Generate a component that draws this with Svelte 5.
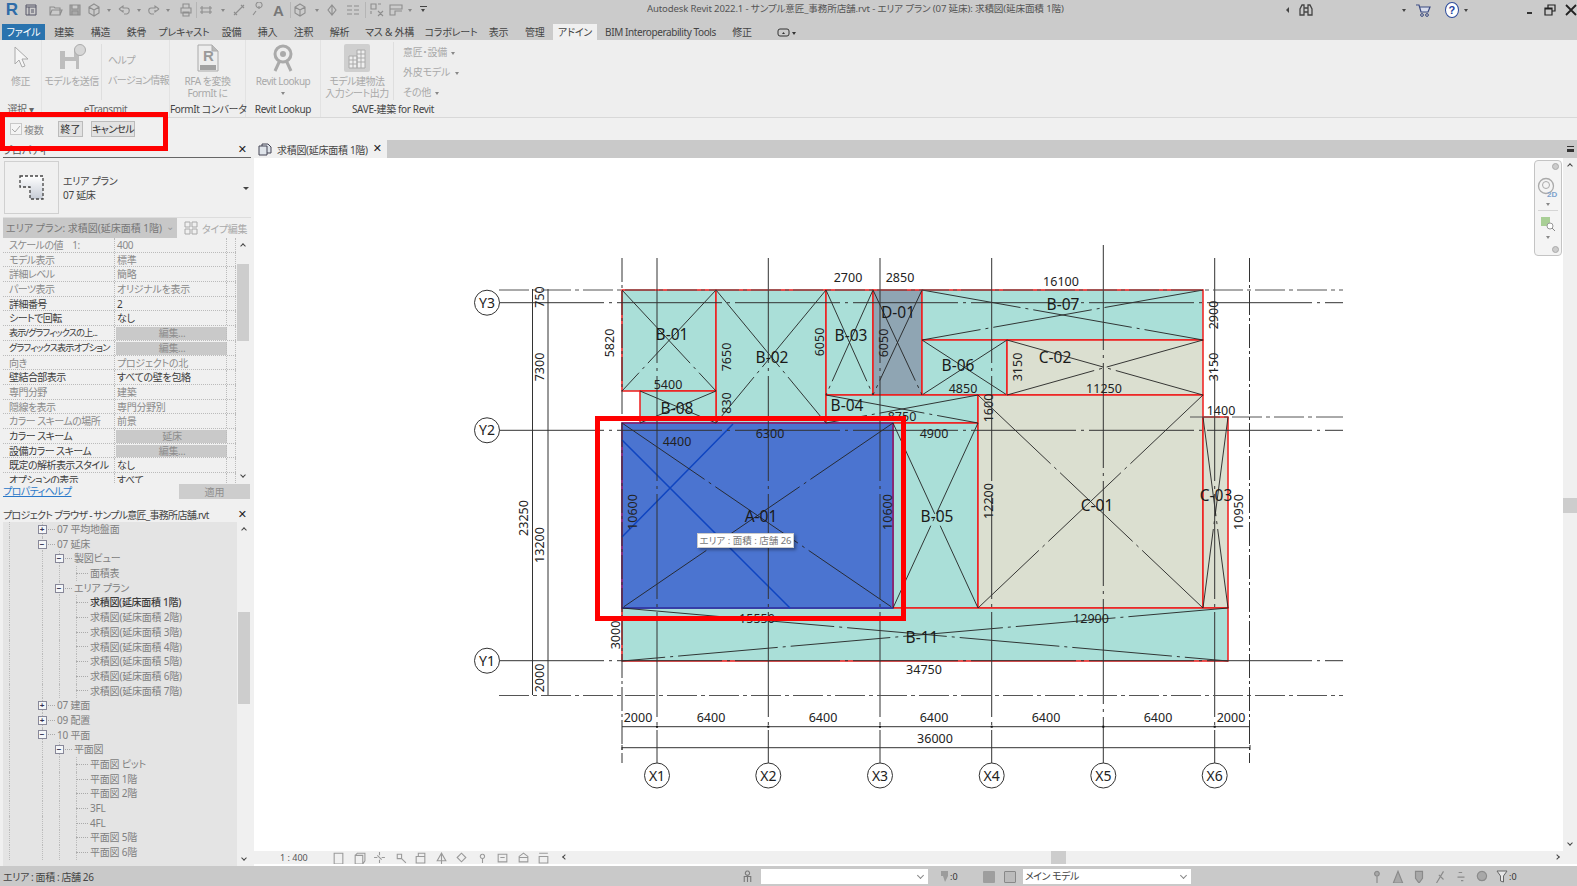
<script lang="ts">
  // label, slot width
  const tabs = [
    ['建築', 37], ['構造', 36], ['鉄骨', 36], ['プレキャスト', 59], ['設備', 36], ['挿入', 36], ['注釈', 36], ['解析', 36],
    ['マス & 外構', 64], ['コラボレート', 59], ['表示', 36], ['管理', 36.5], ['アドイン', 44],
    ['BIM Interoperability Tools', 127], ['修正', 36]
  ];

  const qat = [
    { d: 'M3 5h4l1 1h5v7H3zM3 13l2-5h10l-2 5', w: 20 },
    { d: 'M3 3h10v10H3zM5 3v4h6V3M5 13V9h6v4', w: 20, fill: '#aaa' },
    { d: 'M8 2l5 3v6l-5 3-5-3V5zM3 5l5 3 5-3M8 8v6', w: 17 },
    { caret: true, w: 14.5 },
    { d: 'M3 7l4-3v2h4c3 0 3 5 0 6H8M3 7l4 3V8', w: 14.5 },
    { caret: true, w: 15 },
    { d: 'M13 7L9 4v2H5c-3 0-3 5 0 6h3M13 7L9 10V8', w: 15 },
    { caret: true, w: 14.5 },
    { d: 'M5 6V2h6v4M3 6h10v5H3zM5 10h6v4H5z', w: 20 },
    { d: 'M2 6h12M2 10h12M4 4v8M12 4v8', w: 20, sep: true },
    { caret: true, w: 15 },
    { d: 'M3 13L13 3M3 10l3 3M10 3l3 3', w: 17.5 },
    { d: 'M3 13l3-4M9 6a3 3 0 1 1 .1 0M9 4v3', w: 19.5 },
    { letter: 'A', w: 22 },
    { d: 'M8 2l5 3v6l-5 3-5-3V5zM3 5l5 3 5-3M8 8v6', w: 20, sep: true },
    { caret: true, w: 14 },
    { d: 'M8 3l4 5-4 5-4-5zM8 3v10', w: 17.5 },
    { d: 'M2 4h5M2 8h5M2 12h5M9 4h5M9 8h5M9 12h5', w: 24 },
    { d: 'M2 2h5v5H2zM9 2h3M2 9v3M9 9l5 5M14 9l-5 5', w: 23, sep: true },
    { d: 'M2 3h12v4H2zM2 7v6h5V9h7', w: 16 },
    { caret: true, w: 12.5 },
    { drop: true, w: 13.5 }
  ];

  const props = [
    ['スケールの値　1:', '400', 0, 0],
    ['モデル表示', '標準', 0, 0],
    ['詳細レベル', '簡略', 0, 0],
    ['パーツ表示', 'オリジナルを表示', 0, 0],
    ['詳細番号', '2', 1, 0],
    ['シートで回転', 'なし', 1, 0],
    ['表示/グラフィックスの上...', '編集...', 1, 1],
    ['グラフィックス表示オプション', '編集...', 1, 1],
    ['向き', 'プロジェクトの北', 0, 0],
    ['壁結合部表示', 'すべての壁を包絡', 1, 0],
    ['専門分野', '建築', 0, 0],
    ['隠線を表示', '専門分野別', 0, 0],
    ['カラー スキームの場所', '前景', 0, 0],
    ['カラー スキーム', '延床', 1, 1],
    ['設備カラー スキーム', '編集...', 1, 1],
    ['既定の解析表示スタイル', 'なし', 1, 0],
    ['オプションの表示', 'すべて', 1, 0]
  ];

  // level, label, expander
  const tree = [
    [1, '07 平均地盤面', '+'],
    [1, '07 延床', '-'],
    [2, '製図ビュー', '-'],
    [3, '面積表', ''],
    [2, 'エリア プラン', '-'],
    [3, '求積図(延床面積 1階)', '', true],
    [3, '求積図(延床面積 2階)', ''],
    [3, '求積図(延床面積 3階)', ''],
    [3, '求積図(延床面積 4階)', ''],
    [3, '求積図(延床面積 5階)', ''],
    [3, '求積図(延床面積 6階)', ''],
    [3, '求積図(延床面積 7階)', ''],
    [1, '07 建面', '+'],
    [1, '09 配置', '+'],
    [1, '10 平面', '-'],
    [2, '平面図', '-'],
    [3, '平面図 ピット', ''],
    [3, '平面図 1階', ''],
    [3, '平面図 2階', ''],
    [3, '3FL', ''],
    [3, '4FL', ''],
    [3, '平面図 5階', ''],
    [3, '平面図 6階', '']
  ];

  const TEAL = '#aadfd8';
  const SAND = '#dbdfd0';
  // x1, y1, x2, y2, fill
  const rooms = [
    [622, 290, 716, 391, TEAL],
    [716, 290, 826, 423, TEAL],
    [826, 290, 873, 395, TEAL],
    [873, 290, 922, 395, '#8fa5b3'],
    [922, 290, 1203, 340, TEAL],
    [922, 340, 1007, 395, TEAL],
    [1007, 340, 1203, 395, SAND],
    [826, 395, 978, 423, TEAL],
    [640, 391, 716, 423, TEAL],
    [893, 423, 978, 608, TEAL],
    [978, 395, 1203, 608, SAND],
    [1203, 417, 1228, 608, SAND],
    [622, 608, 1228, 661, TEAL],
    [622, 423, 893, 608, '#4b74d0']
  ];

  const gridX = [
    ['X1', 657, 258], ['X2', 768.3, 258], ['X3', 880, 258],
    ['X4', 991.7, 258], ['X5', 1103.3, 245], ['X6', 1214.7, 258]
  ];
  const gridY = [['Y3', 302.7], ['Y2', 430.3], ['Y1', 660.7]];

  // x, y, text
  const dimsH = [
    [848, 277, '2700'], [900, 277, '2850'], [1061, 281, '16100'], [668, 384, '5400'],
    [677, 441, '4400'], [770, 433, '6300'], [902, 416, '8750'], [934, 433, '4900'],
    [963, 388, '4850'], [1104, 388, '11250'], [1221, 410, '1400'], [757, 618, '15550'],
    [1091, 618, '12900'], [924, 669, '34750'], [638, 717, '2000'], [711, 717, '6400'],
    [823, 717, '6400'], [934, 717, '6400'], [1046, 717, '6400'], [1158, 717, '6400'],
    [1231, 717, '2000'], [935, 738, '36000']
  ];
  const dimsV = [
    [539, 297, '750'], [539, 367, '7300'], [609, 343, '5820'], [726, 357, '7650'],
    [726, 403, '830'], [819, 342, '6050'], [883, 343, '6050'], [523, 518, '23250'],
    [539, 545, '13200'], [539, 678, '2000'], [632, 512, '10600'], [887, 512, '10600'],
    [615, 635, '3000'], [1213, 315, '2900'], [1213, 367, '3150'], [1017, 367, '3150'],
    [988, 408, '1600'], [988, 501, '12200'], [1238, 512, '10950']
  ];
  const tags = [
    [672, 334, 'B-01'], [772, 357, 'B-02'], [851, 335, 'B-03'], [898, 312, 'D-01'],
    [677, 408, 'B-08'], [847, 405, 'B-04'], [761, 516, 'A-01'], [1063, 304, 'B-07'],
    [1055, 357, 'C-02'], [958, 365, 'B-06'], [1097, 505, 'C-01'], [1216, 495, 'C-03'],
    [937, 516, 'B-05'], [922, 637, 'B-11']
  ];

  const viewIcons = ['M2 2h8v10H2z', 'M2 4h7v8H2zM2 4l2-2h7v7l-2 3', 'M6 1v3M6 8v3M1 6h3M8 6h3M4 4l4 4', 'M3 3h4v4H3zM7 7l4 4', 'M2 5h8v6H2zM4 5V2h6v3', 'M2 9l4-7 4 7zM6 2v10', 'M2 6l4-4 4 4-4 4z', 'M6 3a2 2 0 1 1-.1 0M6 7v4', 'M2 3h8v7H2zM4 6h4', 'M2 10V5l4-3 4 3v5zM2 6h8', 'M2 2h8M2 5h8v6H2z'];
  const statusIcons = ['M6 2a2 2 0 1 1-.1 0M6 6v6', 'M2 12l4-10 4 10z', 'M3 2h6v6l-3 4-3-4z', 'M3 12L9 2M5 5l4 4', 'M4 3h3M3 7h6M6 10h2', 'M6 2a4 4 0 1 1-.1 0'];
</script>

<div class="app">
  <header class="titlebar">
    <div class="qat">
      <span class="logo">R</span>
      <svg class="qi doc" width="14" height="14" viewBox="0 0 14 14"><path d="M2 2h10v10H2zM2 4h10M5 4v8M7 7h3M7 9h3" fill="none" stroke="#556"/></svg>
      <span class="qat-gap"></span>
      {#each qat as q}
        <span class="qat-item" class:with-sep={q.sep} style="width:{q.w}px">
          {#if q.d}
            <svg width="16" height="16" viewBox="0 0 16 16"><path d={q.d} fill={q.fill ?? 'none'} stroke="#8e8e8e" stroke-width="1.1"/></svg>
          {:else if q.caret}
            <span class="caret"></span>
          {:else if q.letter}
            <span class="qat-letter">{q.letter}</span>
          {:else if q.drop}
            <span class="drop-line"></span><span class="caret dark"></span>
          {/if}
        </span>
      {/each}
    </div>
    <div class="doc-title">Autodesk Revit 2022.1 - サンプル意匠_事務所店舗.rvt - エリア プラン (07 延床): 求積図(延床面積 1階)</div>
    <div class="title-right">
      <span class="tri-left"></span>
      <svg class="binoc" width="16" height="14" viewBox="0 0 16 14"><path d="M2 12V6l2-4h2v10zM14 12V6l-2-4h-2v10zM6 5h4M6 9h4" fill="none" stroke="#444" stroke-width="1.3"/></svg>
      <span class="caret dark signin"></span>
      <svg class="cart" width="16" height="14" viewBox="0 0 16 14"><path d="M1 2h3l2 7h7l2-5H5" fill="#d7dcec" stroke="#3b4a80" stroke-width="1.2"/><circle cx="7" cy="12" r="1.4" fill="none" stroke="#3b4a80"/><circle cx="12" cy="12" r="1.4" fill="none" stroke="#3b4a80"/></svg>
      <span class="help">?</span>
      <span class="caret dark"></span>
      <span class="win min"></span>
      <svg class="win-restore" width="12" height="12" viewBox="0 0 12 12"><path d="M1 4h7v7H1zM4 4V1h7v6H8M1 5h7" fill="none" stroke="#222" stroke-width="1.2"/></svg>
      <svg class="win-close" width="12" height="12" viewBox="0 0 12 12"><path d="M1 1l10 10M11 1L1 11" stroke="#222" stroke-width="1.8"/></svg>
    </div>
  </header>

  <nav class="tabs">
    <span class="file-tab">ファイル</span>
    {#each tabs as t}
      <span class="tab" class:active={t[0] === 'アドイン'} class:latin={t[1] > 100} style="width:{t[1]}px">{t[0]}</span>
    {/each}
    <svg class="tab-extra" width="20" height="10" viewBox="0 0 20 10"><rect x="1" y="1" width="11" height="7" rx="2" fill="none" stroke="#333"/><path d="M5 6h3L6.500 4zM15 4h4l-2 3z" fill="#333"/></svg>
  </nav>

  <section class="ribbon">
    <div class="panel" style="width:42px">
      <div class="panel-body center">
        <div class="tool">
          <svg width="18" height="26" viewBox="0 0 18 26"><path d="M3 2v17l4-4 3 7 3-1-3-7h6z" fill="#f6f6f6" stroke="#aaa"/></svg>
          <span>修正</span>
        </div>
      </div>
      <div class="panel-title">選択 ▾</div>
    </div>
    <div class="panel" style="width:128px">
      <div class="panel-body">
        <div class="tool send">
          <svg width="28" height="28" viewBox="0 0 28 28"><path d="M2 7h19v18H2z" fill="#bdbdbd"/><path d="M7 7h9v6H7zM7 17h11v8H7z" fill="#ededed"/><circle cx="22" cy="6" r="5.500" fill="#d6d6d6" stroke="#aaa"/></svg>
          <span>モデルを送信</span>
        </div>
        <div class="tool-list bordered">
          <span>ヘルプ</span>
          <span>バージョン情報</span>
        </div>
      </div>
      <div class="panel-title">eTransmit</div>
    </div>
    <div class="panel" style="width:76px">
      <div class="panel-body center">
        <div class="tool">
          <svg width="24" height="28" viewBox="0 0 24 28"><path d="M2 1h14l6 6v20H2z" fill="#ededed" stroke="#aaa"/><path d="M16 1v6h6" fill="#bbb" stroke="#aaa"/><rect x="4" y="21" width="16" height="5" fill="#a2a2a2"/><text x="7" y="17" font-size="15" font-weight="700" fill="#9a9a9a" font-family="Liberation Sans">R</text></svg>
          <span>RFA を変換</span>
          <span>FormIt に</span>
        </div>
      </div>
      <div class="panel-title dark">FormIt コンバータ</div>
    </div>
    <div class="panel" style="width:75px">
      <div class="panel-body center">
        <div class="tool">
          <svg width="24" height="28" viewBox="0 0 24 28"><path d="M4 27l6-13M20 27l-6-13" stroke="#aaa" stroke-width="3"/><circle cx="12" cy="10" r="8" fill="#ededed" stroke="#aaa" stroke-width="3"/><circle cx="12" cy="10" r="3" fill="#aaa"/></svg>
          <span>Revit Lookup</span>
          <span class="caret small-caret"></span>
        </div>
      </div>
      <div class="panel-title dark">Revit Lookup</div>
    </div>
    <div class="panel save" style="width:150px">
      <div class="panel-body">
        <div class="tool build">
          <svg width="26" height="28" viewBox="0 0 26 28"><rect width="26" height="28" rx="2" fill="#cfcfcf"/><path d="M5 12h8v12H5zM13 6h8v18h-8z" fill="#eee" stroke="#aaa"/><path d="M5 16h8M5 20h8M13 10h8M13 14h8M13 18h8M9 12v12M17 6v18" stroke="#aaa"/></svg>
          <span>モデル建物法</span>
          <span>入力シート出力</span>
        </div>
        <div class="tool-list save-list bordered">
          <span>意匠・設備 <i class="caret"></i></span>
          <span>外皮モデル <i class="caret"></i></span>
          <span>その他 <i class="caret"></i></span>
        </div>
      </div>
      <div class="panel-title dark save-title">SAVE-建築 for Revit</div>
    </div>
  </section>

  <section class="optionbar">
    <label class="multi"><span class="check">
      <svg width="10" height="10" viewBox="0 0 10 10"><path d="M1 5l3 3 5-6" fill="none" stroke="#aaa"/></svg>
    </span>複数</label>
    <button class="opt-btn finish">終了</button>
    <button class="opt-btn cancel">キャンセル</button>
  </section>

  <main class="main">
    <aside class="side">
      <section class="props">
        <div class="side-title">プロパティ<span class="x">✕</span></div>
        <div class="type-box">
          <div class="type-preview">
            <svg width="26" height="26" viewBox="0 0 26 26"><defs><linearGradient id="lg" x1="0" y1="0" x2="0" y2="1"><stop offset="0" stop-color="#fff"/><stop offset="1" stop-color="#c6ccd6"/></linearGradient></defs><path d="M1 1h23v23H11V12H1z" fill="url(#lg)" stroke="#444" stroke-width="1.3" stroke-dasharray="3 2"/></svg>
          </div>
          <div class="type-text"><span>エリア プラン</span><span>07 延床</span></div>
          <span class="caret dark type-caret"></span>
        </div>
        <div class="inst-row">
          <div class="inst-select">エリア プラン: 求積図(延床面積 1階)<span class="chev">⌄</span></div>
          <div class="type-edit">
            <svg width="14" height="14" viewBox="0 0 14 14"><path d="M1 1h5v5H1zM8 1h5v5H8zM1 8h5v5H1zM8 8h5v5H8z" fill="none" stroke="#aaa"/></svg>
            タイプ編集
          </div>
        </div>
        <div class="prop-wrap">
          <div class="prop-grid">
            {#each props as p}
              <div class="prop-row" class:on={p[2]}>
                <span class="pl" class:tight={p[0].length > 13}>{p[0]}</span>
                {#if p[3]}
                  <span class="pv pbtn">{p[1]}</span>
                {:else}
                  <span class="pv">{p[1]}</span>
                {/if}
                <span class="pe"></span>
              </div>
            {/each}
          </div>
          <div class="scroll">
            <span class="chev-up"></span>
            <span class="thumb prop-thumb"></span>
            <span class="chev-down"></span>
          </div>
        </div>
        <div class="help-row">
          <span class="help-link">プロパティヘルプ</span>
          <button class="apply">適用</button>
        </div>
      </section>

      <section class="browser">
        <div class="side-title b-title"><span class="b-name">プロジェクト ブラウザ - サンプル意匠_事務所店舗.rvt</span><span class="x">✕</span></div>
        <div class="tree-wrap">
          <div class="tree">
            {#each tree as n}
              <div class="node" class:bold={n[3]} class:leaf={n[0] === 3} style="padding-left:{n[0] === 1 ? 34.5 : n[0] === 2 ? 51.5 : 73}px">
                <i class="guide" style="left:9px"></i>
                <i class="guide" style="left:42px"></i>
                {#if n[0] > 1}<i class="guide" style="left:59px"></i>{/if}
                {#if n[0] === 3}<i class="guide" style="left:76px"></i>{/if}
                {#if n[2]}<span class="box">{n[2] === '+' ? '+' : '−'}</span>{/if}
                <span class="dash"></span>
                <span class="node-label">{n[1]}</span>
              </div>
            {/each}
          </div>
          <div class="scroll tree-scroll">
            <span class="chev-up"></span>
            <span class="thumb tree-thumb"></span>
            <span class="chev-down"></span>
          </div>
        </div>
      </section>
    </aside>

    <div class="view">
      <div class="view-tabs">
        <div class="view-tab">
          <svg width="14" height="13" viewBox="0 0 14 13"><path d="M1 3h8v9H1zM4 3V1h6l3 3v6H9" fill="#dfe4ea" stroke="#445"/></svg>
          <span class="view-name">求積図(延床面積 1階)</span>
          <span class="x">✕</span>
        </div>
        <span class="tab-menu"></span>
      </div>

      <div class="canvas-row">
        <div class="canvas">
          <svg class="plan" width="1309" height="693" viewBox="254 158 1309 693">
            {#each rooms as r}
              <rect x={r[0]} y={r[1]} width={r[2] - r[0]} height={r[3] - r[1]} fill={r[4]} stroke="#f01c1c" stroke-width="1.5"/>
            {/each}
            <rect x="622" y="423" width="271" height="185" fill="none" stroke="#6b2a8c" stroke-width="1.5"/>
            <path d="M622 608H893" stroke="#1a44b8" stroke-width="1.5"/>
            <path d="M622 440L790 608M733 424L622 537" stroke="#0f45c0" stroke-width="1.5" fill="none"/>

            {#each rooms as r}
              <path class="diag" d="M{r[0]} {r[1]}L{r[2]} {r[3]}M{r[2]} {r[1]}L{r[0]} {r[3]}"/>
            {/each}

            <!-- grids -->
            {#each gridX as g}
              <path class="grid" d="M{g[1]} {g[2]}V763"/>
              <circle class="bubble" cx={g[1]} cy="775.500" r="12.500"/>
              <text class="bubble-text" x={g[1]} y="780.500">{g[0]}</text>
            {/each}
            {#each gridY as g}
              <path class="grid" d="M499 {g[1]}H1343"/>
              <circle class="bubble" cx="487" cy={g[1]} r="12.500"/>
              <text class="bubble-text" x="487" y={g[1] + 5}>{g[0]}</text>
            {/each}
            <path class="ref" d="M499 290H1343M499 695.500H1343M1190 417H1343"/>
            <path class="ref-v" d="M622 258V763M1249.500 258V763"/>

            <!-- dimension lines -->
            <path class="dim" d="M532.500 289V695M548 289V695M622 726.700H1250M622 747.700H1250M622 745V750M1250 745V750"/>
            {#each gridX as g}
              <rect x={g[1] - 1} y="725.700" width="2" height="2" fill="#111"/>
            {/each}

            {#each dimsH as d}
              <text class="dim-t" x={d[0]} y={d[1] + 5}>{d[2]}</text>
            {/each}
            {#each dimsV as d}
              <text class="dim-t" transform="translate({d[0] + 4.500} {d[1]}) rotate(-90)">{d[2]}</text>
            {/each}
            {#each tags as t}
              <text class="tag" x={t[0]} y={t[1] + 5.500}>{t[2]}</text>
            {/each}
          </svg>

          <div class="hover-tip">エリア : 面積 : 店舗 26</div>

          <div class="nav-bar">
            <span class="nav-dot top"></span>
            <svg width="22" height="22" viewBox="0 0 22 22"><circle cx="9" cy="9" r="7.500" fill="none" stroke="#aaa" stroke-width="1.300"/><circle cx="9" cy="8" r="3.500" fill="none" stroke="#aaa"/><text x="10" y="20" font-size="8" font-weight="700" fill="#7ea2cc" font-family="Liberation Sans">2D</text></svg>
            <span class="caret"></span>
            <span class="nav-sep"></span>
            <svg width="16" height="16" viewBox="0 0 16 16"><rect x="1" y="1" width="9" height="9" fill="#a9cf96"/><circle cx="10" cy="10" r="3" fill="#fff" stroke="#999"/><path d="M12 12l3 3" stroke="#888"/></svg>
            <span class="caret"></span>
            <span class="nav-dot bottom"></span>
          </div>
        </div>
        <div class="v-scroll">
          <span class="chev-up"></span>
          <span class="thumb v-thumb"></span>
          <span class="chev-down"></span>
        </div>
      </div>

      <div class="view-bar">
        <span class="scale">1 : 400</span>
        <div class="view-icons">
          {#each viewIcons as d}
            <svg width="13" height="13" viewBox="0 0 12 12"><path {d} fill="none" stroke="#9a9a9a"/></svg>
          {/each}
        </div>
        <div class="h-scroll">
          <span class="chev-left"></span>
          <span class="thumb h-thumb"></span>
          <span class="chev-right"></span>
        </div>
      </div>
    </div>
  </main>

  <footer class="status">
    <span class="status-text">エリア : 面積 : 店舗 26</span>
    <div class="status-mid">
      <svg width="13" height="13" viewBox="0 0 12 12"><path d="M6 1a2 2 0 1 1-.1 0M3 11V6h6v5M6 6v5" fill="none" stroke="#777"/></svg>
      <span class="combo c1"></span>
      <span class="zero mid-zero"><svg width="9" height="13" viewBox="0 0 9 13"><path d="M1 1h7v5l-3 6-2-6H1z" fill="#9c9c9c"/></svg>:0</span>
      <span class="sq"></span>
      <span class="sq outline"></span>
      <span class="combo c2">メイン モデル</span>
    </div>
    <div class="status-right">
      {#each statusIcons as d}
        <svg width="14" height="14" viewBox="0 0 12 12"><path {d} fill="#a8a8a8" stroke="#8a8a8a"/></svg>
      {/each}
      <span class="zero"><svg width="12" height="13" viewBox="0 0 12 13"><path d="M1 1h10L7.500 6v6l-3-1V6z" fill="#e6e6e6" stroke="#666"/></svg>:0</span>
    </div>
  </footer>

  <div class="mark mark-options"></div>
  <div class="mark mark-room"></div>
</div>

<style>
  :global(body) {
    margin: 0;
    background: #fff;
    overflow: hidden;
  }
  .app {
    position: relative;
    width: 1577px;
    height: 886px;
    display: grid;
    grid-template-rows: 24px 16px 78px 22px 726px 20px;
    overflow: hidden;
    font-family: "Noto Sans", "Noto Sans CJK JP", sans-serif;
    font-size: 10px;
    font-feature-settings: "palt";
    color: #555;
    background: #f0f0f0;
  }
  svg { display: block; flex: none; }
  button { font-family: inherit; font-feature-settings: inherit; }

  /* title bar */
  .titlebar {
    display: flex;
    align-items: flex-start;
    background: #cbcbcb;
    position: relative;
  }
  .qat { display: flex; align-items: center; height: 20px; }
  .logo {
    width: 24px;
    text-align: center;
    font: 700 17px "Liberation Sans", sans-serif;
    color: #2f6ca8;
  }
  .qat-gap { width: 7px; }
  .qat-item {
    display: flex;
    align-items: center;
    justify-content: center;
    flex: none;
    height: 20px;
    position: relative;
  }
  .with-sep::before {
    content: '';
    position: absolute;
    left: 0;
    top: 2px;
    bottom: 2px;
    width: 1px;
    background: #b5b5b5;
  }
  .qat-letter { font: 700 15px "Liberation Sans", sans-serif; color: #777; }
  .caret {
    display: inline-block;
    width: 0;
    height: 0;
    border-left: 2.5px solid transparent;
    border-right: 2.5px solid transparent;
    border-top: 3px solid #888;
    vertical-align: middle;
  }
  .caret.dark { border-top-color: #444; }
  .drop-line { position: absolute; top: 6px; width: 7px; height: 1px; background: #444; }
  .doc-title {
    position: absolute;
    left: 647px;
    top: 2px;
    line-height: 14px;
    font-size: 9.6px;
    letter-spacing: -0.15px;
    color: #555;
    white-space: nowrap;
  }
  .title-right {
    position: absolute;
    top: 0;
    right: 0;
    height: 20px;
    width: 295px;
    display: flex;
    align-items: center;
  }
  .tri-left {
    width: 0; height: 0;
    margin-right: 9px;
    margin-left: 4px;
    border-top: 3px solid transparent;
    border-bottom: 3px solid transparent;
    border-right: 3px solid #444;
  }
  .signin { margin-left: 88px; margin-right: 9px; }
  .cart { margin-right: 14px; }
  .help {
    width: 14px;
    height: 14px;
    margin-right: 5px;
    border-radius: 50%;
    border: 1px solid #2b4a9c;
    background: #fff;
    color: #1d3fa0;
    font: 700 11px/14px "Liberation Sans", sans-serif;
    text-align: center;
  }
  .win.min { width: 6px; height: 2px; background: #333; margin: 6px 0 0 59px; }
  .win-restore { margin-left: 12px; }
  .win-close { margin-left: 9px; }

  /* ribbon tabs */
  .tabs {
    display: flex;
    align-items: stretch;
    background: #cbcbcb;
    line-height: 16px;
    padding-left: 2px;
    color: #444;
    letter-spacing: -0.2px;
  }
  .file-tab {
    width: 43px;
    background: #2a73ae;
    color: #fff;
    text-align: center;
    margin-right: 0.5px;
  }
  .tab { flex: none; text-align: center; white-space: nowrap; }
  .tab.active { background: #f0f0f0; }
  .tab.latin { letter-spacing: -0.4px; }
  .tab-extra { margin: 4px 0 0 17px; }

  /* ribbon */
  .ribbon {
    display: flex;
    background: #eeeeee;
    border-bottom: 1px solid #d8d8d8;
    box-sizing: border-box;
    color: #a9a9a9;
  }
  .panel {
    flex: none;
    box-sizing: border-box;
    display: flex;
    flex-direction: column;
    border-right: 1px solid #e2e2e2;
  }
  .panel.save { border-right: 0; }
  .panel-body {
    height: 63px;
    display: flex;
    padding-top: 4px;
    box-sizing: border-box;
  }
  .panel-body.center { justify-content: center; }
  .panel-title {
    text-align: center;
    line-height: 13px;
    color: #666;
    white-space: nowrap;
    letter-spacing: -0.35px;
  }
  .panel-title.dark { color: #444; }
  .save-title { padding-right: 6px; }
  .tool {
    display: flex;
    flex-direction: column;
    align-items: center;
    line-height: 12px;
    white-space: nowrap;
    letter-spacing: -0.5px;
  }
  .tool svg { height: 28px; margin-bottom: 3px; }
  .small-caret { margin-top: 5px; }
  .send { width: 62px; }
  .build { width: 72px; }
  .tool-list {
    display: flex;
    flex-direction: column;
    white-space: nowrap;
    padding: 6px 0 0 6px;
    line-height: 20px;
    height: 56px;
    box-sizing: border-box;
    letter-spacing: -0.6px;
  }
  .bordered { border-left: 1px solid #dedede; }
  .save-list { padding: 0 0 0 9px; margin-top: -2px; height: 58px; letter-spacing: -0.2px; }
  .save-list i { margin-left: 2px; }

  /* options bar */
  .optionbar {
    display: flex;
    align-items: center;
    padding-left: 10px;
    background: #f0f0f0;
    color: #888;
  }
  .multi { display: flex; align-items: center; gap: 2px; width: 48px; letter-spacing: -0.3px; }
  .check {
    width: 10px;
    height: 10px;
    border: 1px solid #c8c8c8;
    background: #f4f4f4;
  }
  .opt-btn {
    height: 16px;
    padding: 0;
    border: 1.5px solid #bbb;
    background: #e2e2e2;
    color: #333;
    font-size: 10px;
    line-height: 12px;
    white-space: nowrap;
  }
  .finish { width: 25px; margin-right: 8px; }
  .cancel { width: 44px; letter-spacing: -0.7px; }

  /* main */
  .main {
    display: grid;
    grid-template-columns: 254px 1fr;
    min-height: 0;
  }
  .side {
    display: grid;
    grid-template-rows: 365px 361px;
    background: #f0f0f0;
    padding-left: 3px;
    box-sizing: border-box;
    min-height: 0;
  }
  .side-title {
    height: 18px;
    line-height: 20px;
    padding-right: 4px;
    margin-right: 3px;
    display: flex;
    justify-content: space-between;
    color: #555;
    border-bottom: 1px solid #666;
    box-sizing: border-box;
  }
  .x { color: #222; font: 700 11px "DejaVu Sans", sans-serif; line-height: 20px; }

  .props { display: flex; flex-direction: column; min-height: 0; }
  .type-box {
    height: 60px;
    display: flex;
    align-items: center;
    position: relative;
    margin-right: 3px;
    border-bottom: 1px solid #ddd;
    box-sizing: border-box;
    color: #444;
  }
  .type-preview {
    width: 55px;
    height: 53px;
    margin-left: 1px;
    box-sizing: border-box;
    border: 1px solid #d0d0d0;
    display: flex;
    align-items: center;
    justify-content: center;
  }
  .type-text { display: flex; flex-direction: column; margin-left: 4px; line-height: 14px; letter-spacing: -0.3px; }
  .type-caret { position: absolute; right: 2px; top: 29px; border-left-width: 3px; border-right-width: 3px; }
  .inst-row { display: flex; height: 20px; margin-right: 3px; }
  .inst-select {
    width: 174px;
    background: #c8c8c8;
    padding-left: 3px;
    box-sizing: border-box;
    line-height: 20px;
    color: #777;
    position: relative;
    white-space: nowrap;
  }
  .chev { position: absolute; right: 3px; top: -2px; color: #999; }
  .type-edit {
    display: flex;
    align-items: center;
    gap: 4px;
    padding-left: 7px;
    color: #aaa;
    white-space: nowrap;
    letter-spacing: -0.3px;
  }
  .prop-wrap {
    display: flex;
    height: 245px;
    overflow: hidden;
  }
  .prop-grid { width: 233px; flex: none; }
  .prop-row {
    display: grid;
    grid-template-columns: 112px 112px 9px;
    height: 14.7px;
    line-height: 14px;
    box-sizing: border-box;
    border-bottom: 1px dotted #bbb;
    color: #8a8a8a;
    white-space: nowrap;
  }
  .prop-row.on { color: #3c3c3c; }
  .pl { padding-left: 6px; overflow: hidden; box-sizing: border-box; letter-spacing: -0.55px; }
  .pl.tight { font-size: 9.2px; letter-spacing: -0.9px; }
  .pl, .pv { border-right: 1px dotted #bbb; }
  .pv { padding-left: 2px; overflow: hidden; letter-spacing: -0.3px; }
  .pe { border-right: 1px dotted #bbb; }
  .pbtn {
    background: #c9c9c9;
    text-align: center;
    color: #8d8d8d;
    margin: 1px 0 0 1px;
    line-height: 12px;
  }
  .scroll, .v-scroll {
    position: relative;
    background: #f0f0f0;
    flex: none;
  }
  .scroll { width: 14px; }
  .thumb { position: absolute; background: #cdcdcd; display: block; }
  .chev-up, .chev-down, .chev-left, .chev-right {
    position: absolute;
    width: 4px;
    height: 4px;
    border: solid #444;
    border-width: 1.5px 0 0 1.5px;
    box-sizing: border-box;
  }
  .chev-up { top: 6px; left: 4.5px; transform: rotate(45deg); }
  .chev-down { bottom: 6px; left: 4.5px; transform: rotate(225deg); }
  .prop-thumb { left: 1px; right: 1px; top: 26px; height: 77px; }
  .help-row {
    height: 20px;
    display: flex;
    justify-content: space-between;
    align-items: flex-start;
    margin-right: 4px;
  }
  .help-link { color: #2a78c8; text-decoration: underline; line-height: 15px; padding-top: 1px; letter-spacing: -0.6px; }
  .apply {
    width: 71px;
    height: 15px;
    margin-top: 1px;
    padding: 0;
    border: 0;
    background: #cdcdcd;
    color: #8f8f8f;
    font-size: 10px;
  }

  .browser { display: flex; flex-direction: column; min-height: 0; }
  .b-title { border-bottom: 0; height: 17px; white-space: nowrap; color: #444; }
  .b-name { letter-spacing: -0.72px; }
  .tree-wrap { display: flex; flex: 1; min-height: 0; overflow: hidden; }
  .tree {
    width: 234px;
    flex: none;
    background: #e4e4e4;
    overflow: hidden;
  }
  .node {
    position: relative;
    height: 14.7px;
    line-height: 14.7px;
    display: flex;
    align-items: center;
    color: #808080;
    white-space: nowrap;
    box-sizing: border-box;
    letter-spacing: -0.2px;
  }
  .node.bold { color: #3c3c3c; font-weight: 500; letter-spacing: -0.3px; }
  .guide {
    position: absolute;
    top: 0;
    bottom: 0;
    border-left: 1px dotted #bbb;
    margin-left: -3px;
  }
  .box {
    position: relative;
    width: 7px;
    height: 7px;
    margin-right: 1px;
    border: 1px solid #889;
    background: #f4f6f8;
    color: #335;
    font: 700 8px/7px "Liberation Sans", sans-serif;
    text-align: center;
    flex: none;
  }
  .dash { width: 7.5px; border-top: 1px dotted #aaa; margin-right: 1px; position: relative; }
  .leaf .dash { width: 12px; }
  .node-label { position: relative; background: #e4e4e4; padding-left: 1px; }
  .tree-scroll { width: 14px; margin-right: 3px; }
  .tree-thumb { left: 1px; right: 1px; top: 90px; height: 92px; }

  /* view */
  .view {
    display: grid;
    grid-template-rows: 18px 693px 13px 2px;
    min-width: 0;
    min-height: 0;
    background: #fff;
  }
  .view-tabs {
    position: relative;
    background: #c9c9c9;
  }
  .view-tab {
    width: 133px;
    height: 18px;
    background: #f0f0f0;
    display: flex;
    align-items: center;
    padding-left: 4px;
    box-sizing: border-box;
    color: #444;
    white-space: nowrap;
  }
  .view-name { margin: 0 5px 0 5px; letter-spacing: -0.3px; }
  .tab-menu {
    position: absolute;
    right: 3px;
    top: 6px;
    width: 7px;
    height: 2px;
    border-top: 1px solid #333;
    border-bottom: 3px solid #333;
  }
  .canvas-row { display: flex; min-height: 0; }
  .canvas { position: relative; width: 1309px; flex: none; background: #fff; overflow: hidden; }
  .plan { position: absolute; inset: 0; }
  .diag { fill: none; stroke: #222; stroke-width: 0.9; stroke-dasharray: 100 5 3 5; }
  .grid { fill: none; stroke: #333; stroke-width: 1; stroke-dasharray: 105 5 3 5; }
  .ref { fill: none; stroke: #555; stroke-width: 1; stroke-dasharray: 30 4 4 4; }
  .ref-v { fill: none; stroke: #333; stroke-width: 1; stroke-dasharray: 24 3 3 3; }
  .dim { fill: none; stroke: #333; stroke-width: 1; }
  .bubble { fill: #fff; stroke: #333; stroke-width: 1; }
  .bubble-text {
    font: 14px "Noto Sans", sans-serif;
    text-anchor: middle;
    fill: #222;
  }
  .dim-t {
    font: 12.5px "Noto Sans", sans-serif;
    text-anchor: middle;
    fill: #222;
  }
  .tag {
    font: 15.5px "Noto Sans", sans-serif;
    text-anchor: middle;
    fill: #1a1a1a;
  }
  .hover-tip {
    position: absolute;
    left: 443px;
    top: 375px;
    width: 97px;
    height: 15px;
    box-sizing: border-box;
    background: #fff;
    border: 1px solid #ccc;
    box-shadow: 2px 2px 3px rgba(0,0,0,0.35);
    font-size: 9.5px;
    line-height: 13px;
    text-align: center;
    color: #777;
    white-space: nowrap;
  }
  .nav-bar {
    position: absolute;
    left: 1280px;
    top: 2px;
    width: 28px;
    height: 96px;
    box-sizing: border-box;
    border: 1.5px solid #c4c4c4;
    border-radius: 4px;
    background: #f4f4f4;
    display: flex;
    flex-direction: column;
    align-items: center;
    padding-top: 16px;
    gap: 4px;
  }
  .nav-sep { width: 20px; height: 1px; background: #d5d5d5; margin: 0 0 1px; }
  .nav-dot {
    position: absolute;
    right: 2px;
    width: 5px;
    height: 5px;
    border-radius: 50%;
    background: #ccc;
    border: 1px solid #aaa;
  }
  .nav-dot.top { top: 2px; }
  .nav-dot.bottom { bottom: 2px; }
  .v-scroll { width: 14px; }
  .v-thumb { left: 0; right: 0; top: 340px; height: 15px; }

  .view-bar {
    display: flex;
    align-items: center;
    background: #f0f0f0;
    position: relative;
  }
  .scale { width: 78px; padding-left: 26px; box-sizing: border-box; font-size: 9px; color: #555; white-space: nowrap; }
  .view-icons { display: flex; gap: 7.5px; width: 226px; flex: none; }
  .h-scroll { position: relative; flex: 1; height: 13px; }
  .chev-left { left: 5px; top: 4px; transform: rotate(-45deg); }
  .chev-right { right: 18px; top: 4px; transform: rotate(135deg); }
  .h-thumb { left: 493px; width: 15px; top: 0; bottom: 0; }

  /* status */
  .status {
    position: relative;
    display: flex;
    align-items: center;
    background: #c9c9c9;
    color: #444;
  }
  .status-text { padding-left: 3px; white-space: nowrap; letter-spacing: -0.4px; }
  .status-mid {
    position: absolute;
    left: 741px;
    top: 3px;
    display: flex;
    align-items: center;
  }
  .combo {
    display: block;
    height: 15px;
    background: #fff;
    box-sizing: border-box;
    line-height: 15px;
    padding-left: 2px;
    position: relative;
    color: #444;
    letter-spacing: -0.5px;
  }
  .combo::after {
    content: '';
    position: absolute;
    right: 5px;
    top: 4px;
    width: 4px;
    height: 4px;
    border: solid #888;
    border-width: 0 1px 1px 0;
    transform: rotate(45deg);
  }
  .c1 { width: 167px; margin: 0 12px 0 7px; }
  .c2 { width: 168px; margin-left: 7px; }
  .zero { display: inline-flex; align-items: center; gap: 1px; font-size: 9px; width: 31px; color: #333; }
  .mid-zero { width: 43px; }
  .sq { width: 12px; height: 12px; background: #9e9e9e; border-radius: 1px; margin-right: 9px; }
  .sq.outline { background: #bbb; border: 1px solid #888; box-sizing: border-box; margin-right: 0; }
  .status-right {
    position: absolute;
    left: 1370px;
    top: 3px;
    display: flex;
    gap: 7px;
    align-items: center;
  }

  /* red markup drawn on the screenshot */
  .mark {
    position: absolute;
    box-sizing: border-box;
    border: 5px solid #ff0000;
    pointer-events: none;
  }
  .mark-options { left: 0; top: 112px; width: 168px; height: 39px; }
  .mark-room { left: 595px; top: 416px; width: 311px; height: 205px; }
</style>
